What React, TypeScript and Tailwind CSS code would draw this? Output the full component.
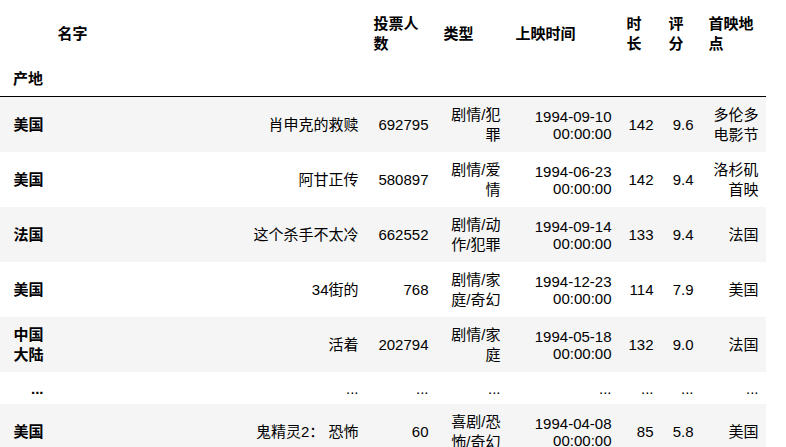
type Row = {
  place: string;
  name: string;
  votes: string;
  genre: string;
  date: string;
  length: string;
  score: string;
  premiere: string;
};

const rows: Row[] = [
  { place: "美国", name: "肖申克的救赎", votes: "692795", genre: "剧情/犯罪", date: "1994-09-10 00:00:00", length: "142", score: "9.6", premiere: "多伦多电影节" },
  { place: "美国", name: "阿甘正传", votes: "580897", genre: "剧情/爱情", date: "1994-06-23 00:00:00", length: "142", score: "9.4", premiere: "洛杉矶首映" },
  { place: "法国", name: "这个杀手不太冷", votes: "662552", genre: "剧情/动作/犯罪", date: "1994-09-14 00:00:00", length: "133", score: "9.4", premiere: "法国" },
  { place: "美国", name: "34街的", votes: "768", genre: "剧情/家庭/奇幻", date: "1994-12-23 00:00:00", length: "114", score: "7.9", premiere: "美国" },
  { place: "中国大陆", name: "活着", votes: "202794", genre: "剧情/家庭", date: "1994-05-18 00:00:00", length: "132", score: "9.0", premiere: "法国" },
];

const lastRow: Row = { place: "美国", name: "鬼精灵2： 恐怖", votes: "60", genre: "喜剧/恐怖/奇幻", date: "1994-04-08 00:00:00", length: "85", score: "5.8", premiere: "美国" };

const cjk = "px-[7.5px] py-[7.5px] text-right align-middle leading-[20px]";
const num = "px-[7.5px] py-[7.5px] text-right align-middle leading-[17px]";
const head = "px-[7.5px] py-[7.5px] text-left align-middle font-bold leading-[20px]";
const idx = "pl-[13px] pr-[6.5px] py-[7.5px] text-right align-middle font-bold leading-[20px]";

function DataRow({ row, shaded }: { row: Row; shaded: boolean }) {
  return (
    <tr className={shaded ? "h-[55px] bg-[#f5f5f5]" : "h-[55px]"}>
      <th className={idx}>{row.place}</th>
      <td className={cjk}>{row.name}</td>
      <td className={num}>{row.votes}</td>
      <td className={cjk}>{row.genre}</td>
      <td className={num}>{row.date}</td>
      <td className={num}>{row.length}</td>
      <td className={num}>{row.score}</td>
      <td className={cjk}>{row.premiere}</td>
    </tr>
  );
}

export default function App() {
  return (
    <div className="h-[447px] w-[786px] overflow-hidden bg-white pt-[6px] font-['Liberation_Sans','Noto_Sans_CJK_SC',sans-serif] text-[15px] text-black">
      <table className="w-[766px] table-fixed border-collapse">
        <colgroup>
          <col className="w-[50px]" />
          <col className="w-[316px]" />
          <col className="w-[70px]" />
          <col className="w-[72px]" />
          <col className="w-[111px]" />
          <col className="w-[42px]" />
          <col className="w-[40px]" />
          <col className="w-[65px]" />
        </colgroup>
        <thead>
          <tr className="h-[55px]">
            <th className={head}></th>
            <th className={head}>名字</th>
            <th className={head}>投票人数</th>
            <th className={head}>类型</th>
            <th className={head}>上映时间</th>
            <th className={head}>时长</th>
            <th className={head}>评分</th>
            <th className={head}>首映地点</th>
          </tr>
          <tr className="h-[35px] border-b border-black">
            <th className="pl-[13px] pr-[6.5px] py-[7.5px] text-left align-middle font-bold leading-[20px]">产地</th>
            <th></th>
            <th></th>
            <th></th>
            <th></th>
            <th></th>
            <th></th>
            <th></th>
          </tr>
        </thead>
        <tbody>
          {rows.map((r, i) => (
            <DataRow key={i} row={r} shaded={i % 2 === 0} />
          ))}
          <tr className="h-[32px]">
            <th className="pl-[13px] pr-[6.5px] py-[7.5px] text-right align-middle font-bold leading-[17px]">...</th>
            <td className={num}>...</td>
            <td className={num}>...</td>
            <td className={num}>...</td>
            <td className={num}>...</td>
            <td className={num}>...</td>
            <td className={num}>...</td>
            <td className={num}>...</td>
          </tr>
          <DataRow row={lastRow} shaded={true} />
        </tbody>
      </table>
    </div>
  );
}
